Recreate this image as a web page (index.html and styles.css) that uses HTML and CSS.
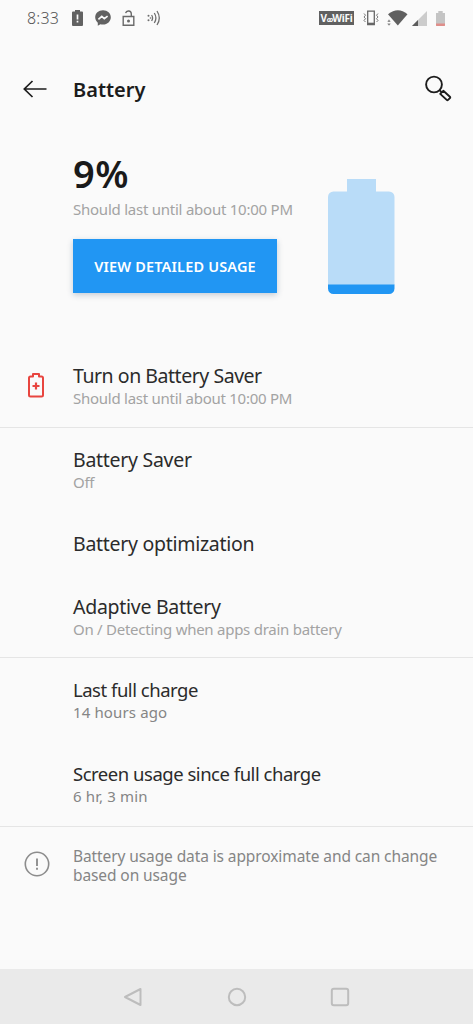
FILE: index.html
```html
<!DOCTYPE html>
<html lang="en">
<head>
<meta charset="utf-8">
<title>Battery</title>
<link rel="stylesheet" href="styles.css">
</head>
<body>
<div class="screen">
  <header class="status">
    <div class="status-left">
      <span class="clock">8:33</span>
      <svg class="st-alert" width="11" height="16" viewBox="0 0 11 16"><path fill="#626262" d="M3 0h5v1.500h2a1 1 0 0 1 1 1V15a1 1 0 0 1-1 1H1a1 1 0 0 1-1-1V2.500a1 1 0 0 1 1-1h2z"/><path stroke="#fafafa" stroke-width="1.700" d="M5.500 4.500v5M5.500 10.800v1.800"/></svg>
      <svg class="st-msg" width="16" height="16" viewBox="0 0 16 16"><path fill="#626262" d="M8 .2C3.500.2.200 3.300.200 7.300c0 2.200 1 4.100 2.600 5.400v3l2.600-1.400c.8.200 1.700.3 2.600.3 4.500 0 7.800-3.200 7.800-7.300S12.500.2 8 .2z"/><path fill="none" stroke="#fafafa" stroke-width="1.700" d="M3.400 9.300l3.400-3 2.500 2.300 3.300-2.500"/></svg>
      <svg class="st-lock" width="13" height="17" viewBox="0 0 13 17"><path fill="none" stroke="#6a6a6a" stroke-width="1.400" d="M1.200 6.500h10.600v8.800H1.200zM9.300 6.500V3.700A2.900 2.900 0 0 0 3.600 3.100"/><circle cx="6.500" cy="10.900" r="1.500" fill="#6a6a6a"/></svg>
      <svg class="st-nfc" width="14" height="16" viewBox="0 0 14 16"><g fill="none" stroke="#6e6e6e" stroke-width="1.300"><path d="M4.600 5q2 3 0 6M7.300 3q3.200 5 0 10M10 1q4.600 7 0 14"/></g><g fill="#6e6e6e"><circle cx="1.500" cy="5.800" r="1"/><circle cx="1.500" cy="10.200" r="1"/><circle cx="3.500" cy="8" r=".8"/></g></svg>
    </div>
    <div class="status-right">
      <span class="vowifi">V<i>ꝏ</i>WiFi</span>
      <svg class="st-vib" width="16" height="16" viewBox="0 0 16 16"><path fill="none" stroke="#666" stroke-width="1.300" d="M4.700 1.200h6.600v13.300H4.700z"/><path stroke="#666" stroke-width="2" d="M4.500 13.700h7"/><path fill="none" stroke="#777" d="M1 3.500l1.500 1.700L1 7l1.500 1.700L1 10.500l1.500 1.500M15 3.500l-1.500 1.700L15 7l-1.500 1.700 1.500 1.800-1.500 1.500"/></svg>
      <svg class="st-wifi" width="21" height="16" viewBox="0 0 21 16"><path fill="#606060" d="M1 4.200Q11 -3.800 20.500 4.200L10.800 15.500z"/><path fill="#666" stroke="#fafafa" stroke-width=".6" d="M0 12l2-2.800L4 12zM0 13.300h4L2 16z"/></svg>
      <svg class="st-cell" width="15" height="15" viewBox="0 0 15 15"><path fill="#ccc" d="M15 0v15H0z"/><path fill="#5c5c5c" d="M6 9v6H0z"/></svg>
      <svg class="st-batt" width="9" height="15" viewBox="0 0 9 15"><path fill="#c4c4c4" d="M2.300 0h4.400v2H9v12.300q0 .7-.7.700H.7Q0 15 0 14.300V2h2.300z"/><path fill="#df8e8a" d="M0 12.500h9v1.800q0 .7-.7.700H.7Q0 15 0 14.300z"/></svg>
    </div>
  </header>

  <div class="appbar">
    <svg class="back" width="24" height="18" viewBox="0 0 24 18"><path fill="none" stroke="#1d1d1d" stroke-width="1.700" d="M23.500 9H1.300M9.500 1L1.300 9l8.200 8"/></svg>
    <h1>Battery</h1>
    <svg class="search" width="28" height="28" viewBox="0 0 28 28"><g fill="none" stroke="#1d1d1d" stroke-width="1.900"><circle cx="10" cy="9.500" r="7.900"/><path d="M15.500 15.200l2 2"/><path stroke-linejoin="round" d="M16.200 18.900l3.100-3.100 6.600 5.900q.7.700 0 1.400l-1.800 1.800q-.7.600-1.400 0z"/></g></svg>
  </div>

  <section class="hero">
    <div class="hero-text">
      <div class="percent">9%</div>
      <div class="hint">Should last until about 10:00 PM</div>
      <button class="usage"><span>VIEW DETAILED USAGE</span></button>
    </div>
    <svg class="level" width="67" height="116" viewBox="0 0 67 116"><path fill="#b9dcf8" d="M19 0h29v12.500h13a5.500 5.500 0 0 1 5.500 5.500v88H0V18a5.500 5.500 0 0 1 5.500-5.500H19z"/><path fill="#2196f3" d="M0 105.500h66.500v4a5.500 5.500 0 0 1-5.500 5.500H5.500a5.500 5.500 0 0 1-5.500-5.500z"/></svg>
  </section>

  <section class="group first">
    <div class="row">
      <svg class="saver" width="16" height="25" viewBox="0 0 16 25"><path fill="none" stroke="#e8453f" stroke-width="2" stroke-linejoin="round" d="M5 1h6v2.500h2.500Q15 3.500 15 5v17q0 1.500-1.500 1.500h-11Q1 23.500 1 22V5q0-1.500 1.500-1.500H5z"/><path stroke="#e8453f" stroke-width="2.200" d="M8 9.500v7M4.500 13h7"/></svg>
      <div><div class="title t1">Turn on Battery Saver</div><div class="sub">Should last until about 10:00 PM</div></div>
    </div>
  </section>
  <section class="group second">
    <div class="row"><div><div class="title">Battery Saver</div><div class="sub">Off</div></div></div>
    <div class="row single"><div class="title">Battery optimization</div></div>
    <div class="row"><div><div class="title">Adaptive Battery</div><div class="sub">On / Detecting when apps drain battery</div></div></div>
  </section>
  <section class="group third">
    <div class="row"><div><div class="title">Last full charge</div><div class="sub">14 hours ago</div></div></div>
    <div class="row"><div><div class="title">Screen usage since full charge</div><div class="sub">6 hr, 3 min</div></div></div>
  </section>
  <section class="note">
    <svg class="info" width="26" height="26" viewBox="0 0 26 26"><circle cx="13" cy="13" r="11.700" fill="none" stroke="#8c8c8c" stroke-width="1.600"/><path stroke="#808080" stroke-width="1.700" d="M13 7.500v7.500M13 16.700v2"/></svg>
    <p>Battery usage data is approximate and can change<br>based on usage</p>
  </section>

  <nav class="navbar">
    <svg width="20" height="20" viewBox="0 0 20 20"><path fill="none" stroke="#bdbdbd" stroke-width="2" stroke-linejoin="round" d="M17.500 2v16L2 10z"/></svg>
    <svg width="20" height="20" viewBox="0 0 20 20"><circle cx="10" cy="10" r="8.200" fill="none" stroke="#bdbdbd" stroke-width="2"/></svg>
    <svg width="20" height="20" viewBox="0 0 20 20"><rect x="1.800" y="1.800" width="16.400" height="16.400" rx="2" fill="none" stroke="#bdbdbd" stroke-width="2"/></svg>
  </nav>
</div>
</body>
</html>
```
FILE: styles.css
```css
* { box-sizing: border-box; }
body { margin: 0; background: #fafafa; font-family: "Noto Sans", "Open Sans", sans-serif; color: #2b2b2b; }
svg { display: block; flex: none; }
.screen { width: 473px; height: 1024px; display: flex; flex-direction: column; overflow: hidden; white-space: nowrap; }
.status { height: 36px; display: flex; justify-content: space-between; padding: 0 28px 0 27px; }
.status-left, .status-right { display: flex; align-items: center; }
.clock { font-size: 16px; font-weight: 300; color: #555; width: 45px; letter-spacing: 0.2px; }
.st-msg { margin-left: 12px; }
.st-lock { margin-left: 11px; }
.st-nfc { margin-left: 12px; }
.vowifi { width: 35px; height: 14px; line-height: 14px; background: #606060; color: #fafafa; font-size: 10px; font-weight: 700; text-align: center; letter-spacing: -0.2px; }
.vowifi i { font-size: 7px; letter-spacing: -1px; }
.st-vib { margin-left: 9px; }
.st-wifi { margin-left: 8px; }
.st-cell { margin-left: 4px; }
.st-batt { margin-left: 9px; }
.appbar { height: 106px; display: flex; align-items: center; padding: 0 21px 0 23px; }
.appbar h1 { margin: 0 auto 0 26px; padding-top: 2px; font-size: 20px; line-height: 26px; font-weight: 600; color: #1c1c1c; }
.hero { height: 202px; display: flex; padding: 10px 0 0 73px; }
.hero-text { width: 255px; }
.percent { height: 44px; line-height: 43px; font-size: 38px; font-weight: 600; color: #1a1a1a; letter-spacing: 0.5px; }
.hint { margin-top: 3px; height: 20px; line-height: 20px; font-size: 15px; color: #a3a3a3; letter-spacing: -0.24px; }
.usage { display: block; margin-top: 20px; width: 204px; height: 54px; padding: 0; border: 0; background: #2196f3; color: #fff; font: 600 14.500px/54px "Noto Sans", sans-serif; letter-spacing: 0.17px; box-shadow: 0 2px 6px rgba(30, 60, 90, .24); }
.level { margin-top: 27px; }
.group { border-bottom: 1px solid #e5e5e5; }
.first { height: 84px; }
.second { height: 230px; }
.third { height: 169px; }
.row { height: 84px; padding: 20px 0 0 73px; display: flex; }
.first .row, .note { padding-left: 24px; }
.saver { margin: 9px 29px 0 4px; }
.single { height: 63px; }
.title { font-size: 19.500px; line-height: 24px; color: #2b2b2b; letter-spacing: -0.28px; }
.title.t1 { letter-spacing: -0.46px; }
.sub { font-size: 15px; line-height: 20px; color: #a3a3a3; letter-spacing: -0.26px; }
.third .title { font-size: 18.500px; letter-spacing: -0.48px; }
.third .sub { color: #858585; letter-spacing: 0.13px; }
.note { height: 142px; padding-top: 20px; display: flex; }
.info { margin: 4px 23px 0 0; }
.note p { margin: 0; font-size: 15.500px; line-height: 19px; color: #858585; letter-spacing: -0.1px; }
.navbar { height: 55px; background: #eaeaea; display: flex; align-items: center; justify-content: space-between; padding: 0 123px; }
```
